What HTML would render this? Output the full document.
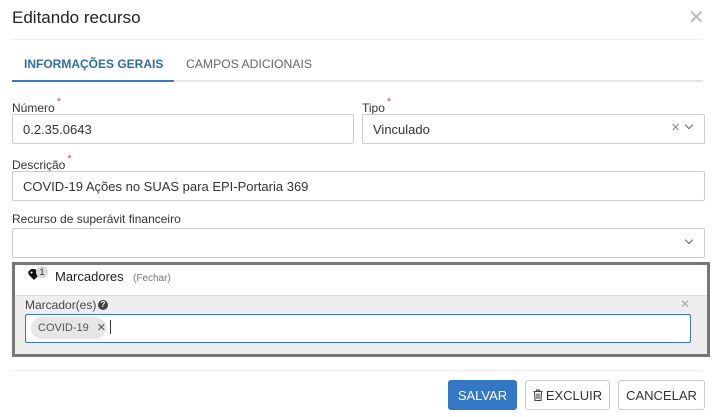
<!DOCTYPE html>
<html><head><meta charset="utf-8"><style>
*{box-sizing:border-box;margin:0;padding:0}
body{width:715px;height:417px;background:#fff;font-family:"Liberation Sans","DejaVu Sans",sans-serif;color:#333;position:relative;overflow:hidden}
.a{position:absolute}
.lbl{font-size:12px;color:#333}
.lbl sup{color:#d9534f;font-size:11px;position:relative;top:-2px;margin-left:2px}
.inp{border:1px solid #ccc;border-radius:2px;background:#fff;font-size:13px;color:#333;padding-left:10px;display:flex;align-items:center}
.btn{border:1px solid #ccc;border-radius:3px;background:#fff;font-size:13px;color:#333;display:flex;align-items:center;justify-content:center}
</style></head><body>
<div class="a" style="left:12px;top:8px;font-size:17px;color:#222">Editando recurso</div>
<div class="a" style="left:688px;top:8px;font-size:20px;color:#bbb;line-height:20px">&#x2715;</div>
<div class="a" style="left:12px;top:39px;width:691px;height:1px;background:#eee"></div>
<div class="a" style="left:24px;top:57px;font-size:12px;color:#2e6da4;font-weight:bold">INFORMAÇÕES GERAIS</div>
<div class="a" style="left:186px;top:57px;font-size:12.2px;color:#666">CAMPOS ADICIONAIS</div>
<div class="a" style="left:12px;top:80px;width:691px;height:2px;background:#e5e5e8"></div>
<div class="a" style="left:12px;top:80px;width:162px;height:2px;background:#3a78c2"></div>

<div class="a lbl" style="left:12px;top:98px">Número<sup>*</sup></div>
<div class="a inp" style="left:12px;top:114px;width:342px;height:30px">0.2.35.0643</div>
<div class="a lbl" style="left:362px;top:98px">Tipo<sup>*</sup></div>
<div class="a inp" style="left:362px;top:114px;width:343px;height:30px">Vinculado</div>
<div class="a" style="left:671px;top:121px;font-size:11px;color:#888">&#x2715;</div>
<div class="a" style="left:686px;top:122px;width:6px;height:6px;border-right:1.3px solid #666;border-bottom:1.3px solid #666;transform:rotate(45deg)"></div>

<div class="a lbl" style="left:12px;top:155px">Descrição<sup>*</sup></div>
<div class="a inp" style="left:12px;top:171px;width:693px;height:30px">COVID-19 Ações no SUAS para EPI-Portaria 369</div>
<div class="a lbl" style="left:12px;top:212px">Recurso de superávit financeiro</div>
<div class="a inp" style="left:12px;top:228px;width:693px;height:30px"></div>
<div class="a" style="left:686px;top:237px;width:6px;height:6px;border-right:1.3px solid #666;border-bottom:1.3px solid #666;transform:rotate(45deg)"></div>

<div class="a" style="left:12px;top:262px;width:698px;height:95px;border:3px solid #777;background:#fff"></div>
<div class="a" style="left:15px;top:295px;width:692px;height:59px;background:#eee;border-top:1px solid #ddd"></div>
<svg class="a" style="left:27px;top:268px" width="14" height="14" viewBox="0 0 14 14"><path d="M1 4 L4 1 L8 1 L13 6 L7 12 L2 7 Z" fill="#111"/><circle cx="4.5" cy="4.5" r="1" fill="#fff"/></svg>
<div class="a" style="left:36px;top:266px;width:12px;height:12px;border-radius:50%;background:#ddd;font-size:9px;text-align:center;line-height:12px;color:#333">1</div>
<div class="a" style="left:55px;top:269px;font-size:13px;color:#222">Marcadores</div>
<div class="a" style="left:133px;top:273px;font-size:10px;color:#777">(Fechar)</div>
<div class="a" style="left:25px;top:298px;font-size:12px;color:#444">Marcador(es)</div>
<div class="a" style="left:98px;top:300px;width:10px;height:10px;border-radius:50%;background:#444;color:#fff;font-size:8px;text-align:center;line-height:10px;font-weight:bold">?</div>
<div class="a" style="left:680px;top:297px;font-size:12px;color:#aaa">&#x2715;</div>
<div class="a" style="left:25px;top:314px;width:666px;height:29px;border:1px solid #3a78c2;border-radius:2px;background:#fff"></div>
<div class="a" style="left:31px;top:317px;width:75px;height:22px;border-radius:11px;background:#e6e6e6;font-size:11px;color:#555;line-height:22px;padding-left:7px">COVID-19 <span style="margin-left:5px;font-size:11px">&#x2715;</span></div>
<div class="a" style="left:110px;top:320px;width:1px;height:14px;background:#333"></div>

<div class="a" style="left:12px;top:370px;width:691px;height:1px;background:#eee"></div>
<div class="a btn" style="left:448px;top:380px;width:69px;height:30px;background:#3477c4;border-color:#3477c4;color:#fff">SALVAR</div>
<div class="a btn" style="left:525px;top:380px;width:85px;height:30px"><svg width="10" height="12" viewBox="0 0 10 12" style="margin-right:3px"><path d="M0.5 2.5H9.5M3.5 2.5V1H6.5V2.5M1.5 2.5L2 11.5H8L8.5 2.5M4 4.5V10M6 4.5V10" stroke="#444" stroke-width="1.1" fill="none"/></svg>EXCLUIR</div>
<div class="a btn" style="left:618px;top:380px;width:87px;height:30px">CANCELAR</div>
</body></html>
